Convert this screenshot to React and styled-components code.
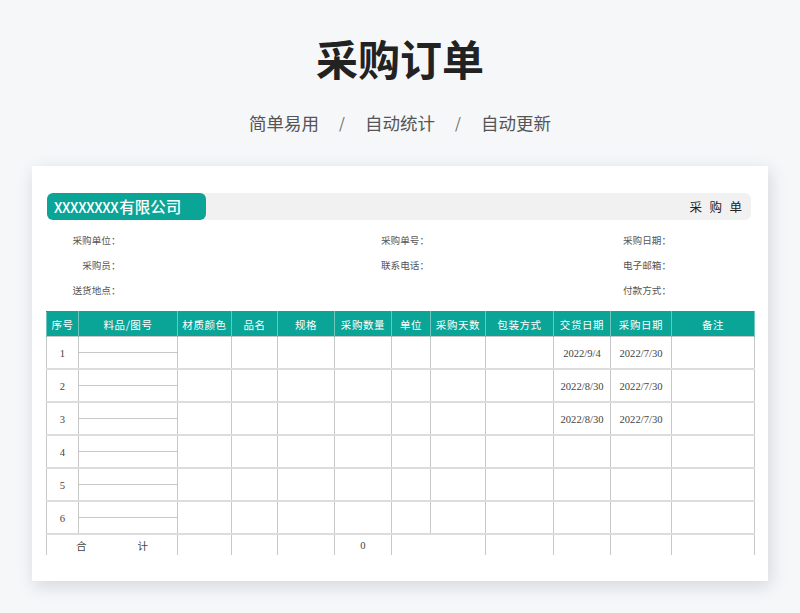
import React from "react";
import styled, { createGlobalStyle } from "styled-components";

const sans = `"Noto Sans CJK SC", "Liberation Sans", sans-serif`;
const serif = `"Liberation Serif", "Noto Sans CJK SC", serif`;

const GlobalStyle = createGlobalStyle`
  html, body {
    margin: 0;
    padding: 0;
    background: #f5f7f9;
  }
`;

const Page = styled.div`
  width: 800px;
  height: 613px;
  overflow: hidden;
  display: flex;
  flex-direction: column;
  align-items: center;
  font-family: ${sans};
`;

const Title = styled.h1`
  margin: 28px 0 0;
  height: 60px;
  line-height: 60px;
  font-size: 42px;
  font-weight: 700;
  color: #222;
`;

const Tagline = styled.div`
  margin-top: 19px;
  height: 30px;
  display: flex;
  align-items: center;
  gap: 18px;
  font-size: 17.5px;
  color: #555;
`;

const Slash = styled.span`
  width: 8px;
  font-size: 15px;
  text-align: center;
  margin: 0 1px;
  color: #666;
`;

const Sheet = styled.div`
  margin-top: 29px;
  width: 736px;
  height: 415px;
  box-sizing: border-box;
  padding: 27px 14px 0;
  background: #fff;
  box-shadow: 2px 5px 16px rgba(60, 70, 90, 0.18);
`;

const Banner = styled.div`
  margin-left: 1px;
  width: 704px;
  height: 27px;
  display: flex;
  align-items: center;
  justify-content: space-between;
  background: #f1f1f1;
  border-radius: 6px;
`;

const Company = styled.div`
  width: 159px;
  height: 27px;
  box-sizing: border-box;
  padding-left: 7px;
  line-height: 27px;
  background: #0ba598;
  border-radius: 6px;
  color: #fff;
  font-size: 15.5px;
  font-weight: 500;
`;

const CompanyMask = styled.span`
  font-size: 14px;
  letter-spacing: -0.3px;
  margin-right: 1px;
`;

const DocName = styled.div`
  padding-right: 9px;
  font-size: 12.5px;
  font-weight: 400;
  letter-spacing: 7.5px;
  margin-right: -7.5px;
  color: #222;
`;

const InfoGrid = styled.div`
  height: 91px;
  display: grid;
  grid-template-columns: 74.5px 308.5px 242px 1fr;
  grid-auto-rows: 25px;
  align-items: center;
  padding-top: 7px;
  box-sizing: border-box;
`;

const InfoLabel = styled.div`
  grid-column: ${(p) => p.$col};
  text-align: right;
  white-space: nowrap;
  font-size: 9.6px;
  color: #555;
`;

const Table = styled.table`
  table-layout: fixed;
  width: 708px;
  border-collapse: collapse;
  font-family: ${serif};
`;

const HeadCell = styled.th`
  height: 24px;
  padding: 0;
  background: #0ba598;
  border: 1px solid #6cc6bd;
  border-top-color: #0ba598;
  border-bottom: none;
  color: #fff;
  font-size: 10.5px;
  font-weight: 400;
  font-family: ${sans};
  letter-spacing: 0.6px;
`;

const Cell = styled.td`
  height: ${(p) => (p.$foot ? "19px" : "30px")};
  padding: 1px 0 0;
  border: 1px solid #c8c8c8;
  border-bottom: ${(p) => (p.$foot ? "none" : "2px solid #dcdcdc")};
  text-align: center;
  vertical-align: middle;
  font-size: 10.6px;
  color: #444;
  white-space: nowrap;
`;

const SplitCell = styled(Cell)`
  vertical-align: top;
  padding: 0;
  height: 31px;
`;

const SplitLine = styled.div`
  height: 15px;
  border-bottom: 1px solid #c8c8c8;
`;

const TotalLabel = styled.div`
  display: flex;
  justify-content: space-between;
  padding: 0 29px;
  font-family: ${sans};
`;

const columns = [32, 99, 54, 46, 57, 57, 39, 55, 68, 57, 61, 83];
const heads = ["序号", "料品/图号", "材质颜色", "品名", "规格", "采购数量", "单位", "采购天数", "包装方式", "交货日期", "采购日期", "备注"];
const rows = [
  { no: 1, due: "2022/9/4", date: "2022/7/30" },
  { no: 2, due: "2022/8/30", date: "2022/7/30" },
  { no: 3, due: "2022/8/30", date: "2022/7/30" },
  { no: 4 },
  { no: 5 },
  { no: 6 },
];

const App = () => {
  return (
    <>
      <GlobalStyle />
      <Page>
        <Title>采购订单</Title>
        <Tagline>
          <span>简单易用</span>
          <Slash>/</Slash>
          <span>自动统计</span>
          <Slash>/</Slash>
          <span>自动更新</span>
        </Tagline>
        <Sheet>
          <Banner>
            <Company>
              <CompanyMask>XXXXXXXX</CompanyMask>有限公司
            </Company>
            <DocName>采购单</DocName>
          </Banner>
          <InfoGrid>
            <InfoLabel $col={1}>采购单位：</InfoLabel>
            <InfoLabel $col={2}>采购单号：</InfoLabel>
            <InfoLabel $col={3}>采购日期：</InfoLabel>
            <InfoLabel $col={1}>采购员：</InfoLabel>
            <InfoLabel $col={2}>联系电话：</InfoLabel>
            <InfoLabel $col={3}>电子邮箱：</InfoLabel>
            <InfoLabel $col={1}>送货地点：</InfoLabel>
            <InfoLabel $col={3}>付款方式：</InfoLabel>
          </InfoGrid>
          <Table>
            <colgroup>
              {columns.map((w, i) => (
                <col key={i} width={w} />
              ))}
            </colgroup>
            <thead>
              <tr>
                {heads.map((h) => (
                  <HeadCell key={h}>{h}</HeadCell>
                ))}
              </tr>
            </thead>
            <tbody>
              {rows.map((r) => (
                <tr key={r.no}>
                  <Cell>{r.no}</Cell>
                  <SplitCell>
                    <SplitLine />
                  </SplitCell>
                  <Cell />
                  <Cell />
                  <Cell />
                  <Cell />
                  <Cell />
                  <Cell />
                  <Cell />
                  <Cell>{r.due}</Cell>
                  <Cell>{r.date}</Cell>
                  <Cell />
                </tr>
              ))}
              <tr>
                <Cell $foot colSpan={2}>
                  <TotalLabel>
                    <span>合</span>
                    <span>计</span>
                  </TotalLabel>
                </Cell>
                <Cell $foot />
                <Cell $foot />
                <Cell $foot />
                <Cell $foot>0</Cell>
                <Cell $foot colSpan={2} />
                <Cell $foot />
                <Cell $foot />
                <Cell $foot />
                <Cell $foot />
              </tr>
            </tbody>
          </Table>
        </Sheet>
      </Page>
    </>
  );
};

export default App;
